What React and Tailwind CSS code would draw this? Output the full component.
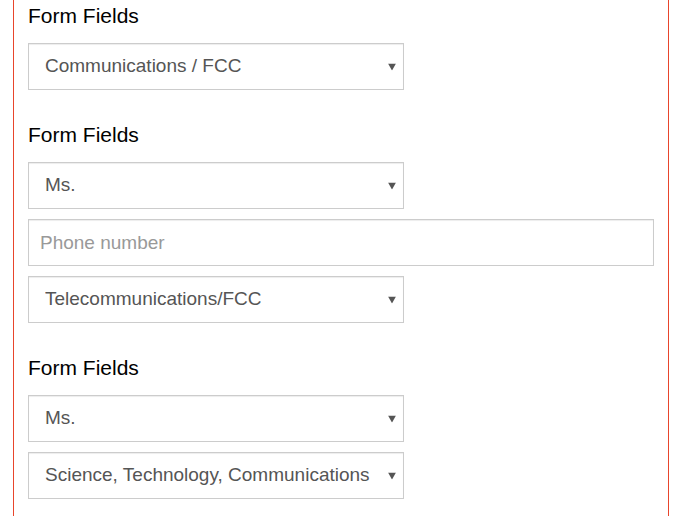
import React from 'react';

const font = { fontFamily: '"Liberation Sans", Arial, Helvetica, sans-serif' };

// Fake select box: value text + little caret on the right
const SelectBox = ({ value }) => (
  <div className="relative flex h-[47px] w-[376px] items-center border border-[#ccc] bg-white pl-[16px] pr-[30px] text-[19px] text-[#555] shadow-[inset_0_1px_1px_rgba(0,0,0,0.075)]">
    <span className="truncate">{value}</span>
    <svg className="absolute right-[7px] top-1/2 -translate-y-1/2" width="8" height="7" viewBox="0 0 8 7">
      <path d="M0 0 H8 L4 7 Z" fill="#555" />
    </svg>
  </div>
);

const Section = ({ children }) => (
  <div className="flex flex-col">
    <h2 className="text-[21px] leading-[22px] text-black">Form Fields</h2>
    <div className="mt-[16px] flex flex-col gap-[10px]">{children}</div>
  </div>
);

export default function App() {
  return (
    <div className="min-h-[516px] w-[680px] bg-white" style={font}>
      <div className="ml-[13px] flex min-h-[516px] w-[656px] flex-col gap-[34px] border-x border-x-[#e8452c] pl-[14px] pr-[14px] pt-[5px]">
        <Section>
          <SelectBox value="Communications / FCC" />
        </Section>

        <Section>
          <SelectBox value="Ms." />
          <input
            type="text"
            placeholder="Phone number"
            className="h-[47px] w-full border border-[#ccc] bg-white px-[11px] text-[19px] text-[#555] shadow-[inset_0_1px_1px_rgba(0,0,0,0.075)] outline-none placeholder:text-[#999]"
          />
          <SelectBox value="Telecommunications/FCC" />
        </Section>

        <Section>
          <SelectBox value="Ms." />
          <SelectBox value="Science, Technology, Communications" />
        </Section>
      </div>
    </div>
  );
}
